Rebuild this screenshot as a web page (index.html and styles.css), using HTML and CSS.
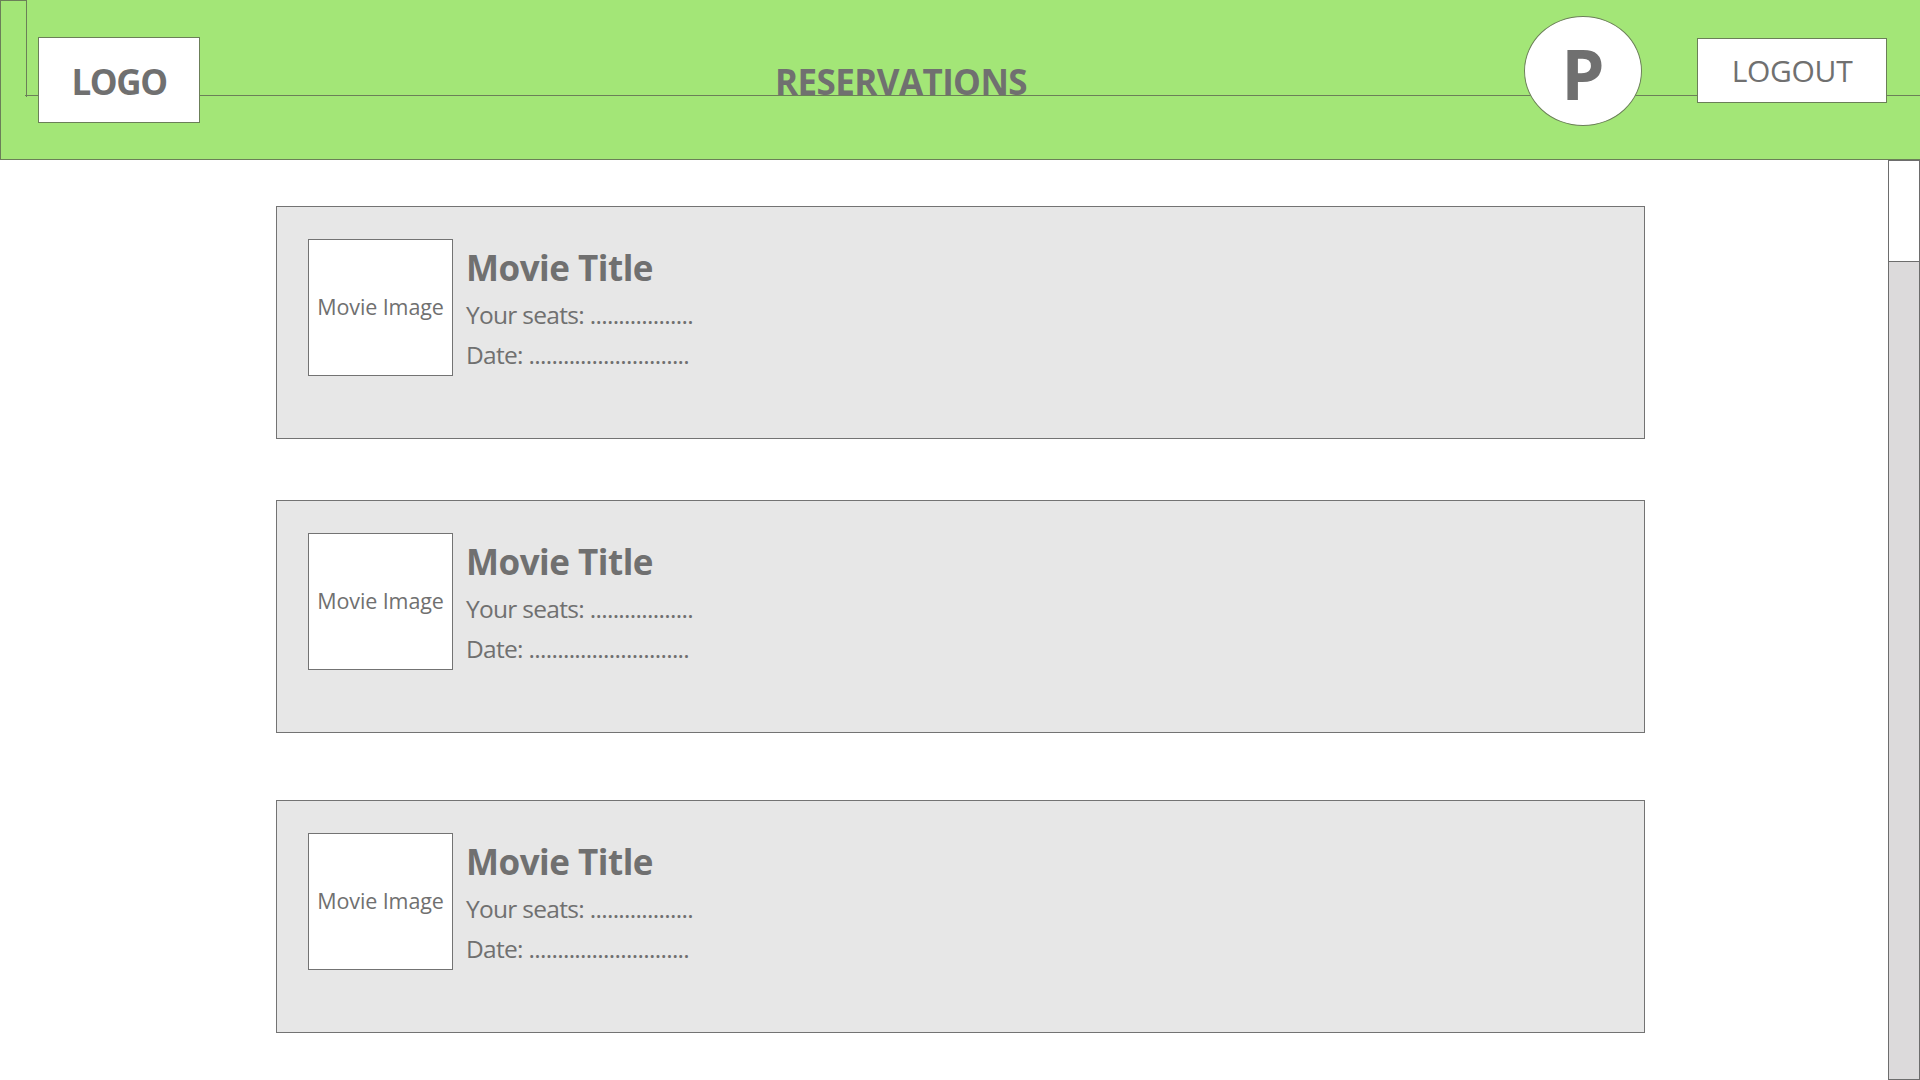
FILE: index.html
```html
<!DOCTYPE html>
<html lang="en">
<head>
<meta charset="utf-8">
<title>Reservations</title>
<link rel="stylesheet" href="styles.css">
</head>
<body>
<header class="topbar">
  <div class="logo">LOGO</div>
  <h1 class="page-title">RESERVATIONS</h1>
  <div class="avatar">P</div>
  <button class="logout">LOGOUT</button>
</header>
<div class="content">
  <main class="list">
    <article class="card">
      <div class="thumb">Movie Image</div>
      <div class="info">
        <h2 class="movie-title">Movie Title</h2>
        <p class="line">Your seats: ..................</p>
        <p class="line">Date: ............................</p>
      </div>
    </article>
    <article class="card">
      <div class="thumb">Movie Image</div>
      <div class="info">
        <h2 class="movie-title">Movie Title</h2>
        <p class="line">Your seats: ..................</p>
        <p class="line">Date: ............................</p>
      </div>
    </article>
    <article class="card">
      <div class="thumb">Movie Image</div>
      <div class="info">
        <h2 class="movie-title">Movie Title</h2>
        <p class="line">Your seats: ..................</p>
        <p class="line">Date: ............................</p>
      </div>
    </article>
  </main>
  <div class="scrollbar"><div class="thumb-bar"></div></div>
</div>
</body>
</html>
```
FILE: styles.css
```css
* { box-sizing: border-box; }
html, body {
  margin: 0;
  padding: 0;
  width: 1920px;
  height: 1080px;
  overflow: hidden;
  background: #ffffff;
  font-family: "Open Sans", "Noto Sans", sans-serif;
  color: #707070;
}

.topbar {
  position: relative;
  display: flex;
  align-items: flex-start;
  height: 160px;
  background: #a3e677;
  border-left: 1px solid #6b7f58;
  border-bottom: 1px solid #6b7f58;
}
.topbar::before {
  content: "";
  position: absolute;
  left: 24px;
  right: 0;
  top: 95px;
  height: 1px;
  background: #6b7f58;
}
.topbar::after {
  content: "";
  position: absolute;
  left: -1px;
  top: 0;
  width: 26px;
  height: 96px;
  border-top: 1px solid #6b7f58;
  border-right: 1px solid #6b7f58;
}

.logo {
  position: relative;
  z-index: 1;
  margin: 37px 0 0 37px;
  width: 162px;
  height: 86px;
  padding-top: 24px;
  background: #ffffff;
  border: 1px solid #6b7f58;
  font-size: 35px;
  font-weight: 700;
  line-height: 40px;
  text-align: center;
  letter-spacing: -1.4px;
}

.page-title {
  position: relative;
  z-index: 1;
  flex: 1;
  margin: 62px 0 0 0;
  padding-left: 78px;
  font-size: 35px;
  font-weight: 700;
  line-height: 40px;
  text-align: center;
  letter-spacing: -0.6px;
}

.avatar {
  position: relative;
  z-index: 1;
  margin-top: 16px;
  width: 118px;
  height: 110px;
  padding-top: 21px;
  border-radius: 50%;
  background: #ffffff;
  border: 1px solid #6b7f58;
  font-size: 69px;
  font-weight: 700;
  line-height: 70px;
  text-align: center;
}

.logout {
  position: relative;
  z-index: 1;
  margin: 38px 33px 0 55px;
  width: 190px;
  height: 65px;
  padding: 0;
  background: #ffffff;
  border: 1px solid #6b7f58;
  border-radius: 0;
  font-family: inherit;
  color: #707070;
  font-size: 30px;
  font-weight: 400;
  line-height: 40px;
  letter-spacing: -0.3px;
  text-align: center;
}

.content {
  display: flex;
  height: 920px;
}
.list {
  flex: 1;
  padding-left: 276px;
}
.card {
  display: flex;
  align-items: flex-start;
  width: 1369px;
  height: 233px;
  padding: 32px 0 0 31px;
  background: #e7e7e7;
  border: 1px solid #737373;
}
.card:nth-child(1) { margin-top: 46px; }
.card:nth-child(2) { margin-top: 61px; }
.card:nth-child(3) { margin-top: 67px; }

.thumb {
  display: flex;
  align-items: center;
  justify-content: center;
  width: 145px;
  height: 137px;
  background: #ffffff;
  border: 1px solid #737373;
  font-size: 21.5px;
  letter-spacing: -0.1px;
  padding-bottom: 2px;
}
.info {
  margin-left: 13px;
  padding-top: 9px;
}
.movie-title {
  margin: 0;
  font-size: 35px;
  font-weight: 700;
  line-height: 40px;
  letter-spacing: -0.5px;
}
.line {
  margin: 0;
  font-size: 24.5px;
  line-height: 40px;
  letter-spacing: -0.7px;
}
.movie-title + .line { margin-top: 7px; }

.scrollbar {
  width: 32px;
  height: 920px;
  background: #dcdadb;
  border: 1px solid #6d6d6d;
}
.thumb-bar {
  height: 101px;
  background: #ffffff;
  border-bottom: 1px solid #6d6d6d;
}
```
